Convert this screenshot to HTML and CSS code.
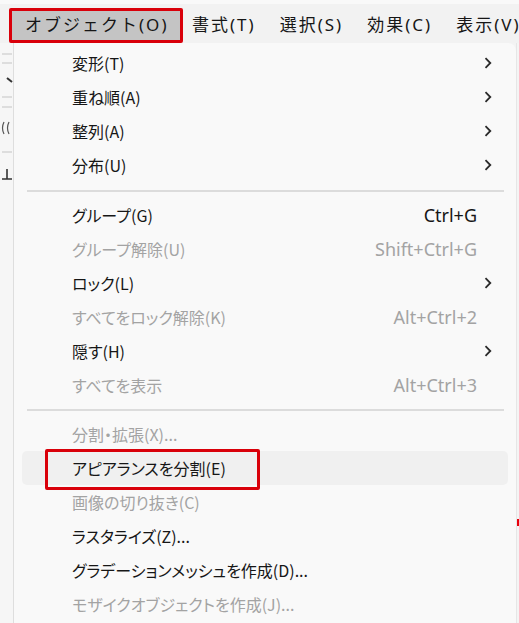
FILE: index.html
```html
<!DOCTYPE html>
<html lang="ja">
<head>
<meta charset="utf-8">
<link rel="stylesheet" href="styles.css">
</head>
<body>
<div class="screen">
  <div class="menubar">
    <div class="mb-item active">オブジェクト(O)</div>
    <div class="mb-item">書式(T)</div>
    <div class="mb-item">選択(S)</div>
    <div class="mb-item">効果(C)</div>
    <div class="mb-item">表示(V)</div>
  </div>
  <div class="main">
    <div class="toolstrip">
      <svg width="13" height="580" viewBox="0 0 13 580">
        <g stroke="#d4d4d4" stroke-width="1.5">
          <line x1="2" y1="11" x2="12" y2="11"/>
          <line x1="2" y1="20" x2="12" y2="20"/>
          <line x1="2" y1="54" x2="12" y2="54"/>
          <line x1="2" y1="64" x2="12" y2="64"/>
          <line x1="2" y1="109" x2="12" y2="109"/>
        </g>
        <line x1="7" y1="35" x2="12" y2="39" stroke="#333" stroke-width="2"/>
        <path d="M4 79 Q1 85 4 91 M9 79 Q6 85 9 91" fill="none" stroke="#555" stroke-width="1.2"/>
        <path d="M7 126 V136 M2 136 H12" fill="none" stroke="#333" stroke-width="1.6"/>
      </svg>
    </div>
    <div class="menu">
      <div class="item"><span class="label">変形(T)</span><svg class="arrow" viewBox="0 0 8 12"><path d="M1.5 1.2 L6.3 6 L1.5 10.8"/></svg></div>
      <div class="item"><span class="label">重ね順(A)</span><svg class="arrow" viewBox="0 0 8 12"><path d="M1.5 1.2 L6.3 6 L1.5 10.8"/></svg></div>
      <div class="item"><span class="label">整列(A)</span><svg class="arrow" viewBox="0 0 8 12"><path d="M1.5 1.2 L6.3 6 L1.5 10.8"/></svg></div>
      <div class="item"><span class="label">分布(U)</span><svg class="arrow" viewBox="0 0 8 12"><path d="M1.5 1.2 L6.3 6 L1.5 10.8"/></svg></div>
      <div class="sep sep1"></div>
      <div class="item"><span class="label">グループ(G)</span><span class="key">Ctrl+G</span></div>
      <div class="item disabled"><span class="label">グループ解除(U)</span><span class="key">Shift+Ctrl+G</span></div>
      <div class="item"><span class="label">ロック(L)</span><svg class="arrow" viewBox="0 0 8 12"><path d="M1.5 1.2 L6.3 6 L1.5 10.8"/></svg></div>
      <div class="item disabled"><span class="label">すべてをロック解除(K)</span><span class="key">Alt+Ctrl+2</span></div>
      <div class="item"><span class="label">隠す(H)</span><svg class="arrow" viewBox="0 0 8 12"><path d="M1.5 1.2 L6.3 6 L1.5 10.8"/></svg></div>
      <div class="item disabled"><span class="label">すべてを表示</span><span class="key">Alt+Ctrl+3</span></div>
      <div class="sep sep2"></div>
      <div class="item disabled"><span class="label">分割・拡張(X)...</span></div>
      <div class="item hover"><span class="label">アピアランスを分割(E)</span><span class="callout"></span></div>
      <div class="item disabled"><span class="label">画像の切り抜き(C)</span></div>
      <div class="item"><span class="label">ラスタライズ(Z)...</span></div>
      <div class="item"><span class="label">グラデーションメッシュを作成(D)...</span></div>
      <div class="item disabled"><span class="label">モザイクオブジェクトを作成(J)...</span></div>
    </div>
    <div class="edge"><span class="edge-mark"></span></div>
  </div>
</div>
</body>
</html>
```
FILE: styles.css
```css
html, body {
  margin: 0;
  padding: 0;
}
body {
  background: #f3f3f3;
  font-family: "Noto Sans CJK JP", sans-serif;
  font-feature-settings: "palt";
  color: #161616;
}
.screen {
  width: 519px;
  height: 623px;
  overflow: hidden;
  display: flex;
  flex-direction: column;
}
.menubar {
  height: 43px;
  box-sizing: border-box;
  padding: 8px 0 0 9px;
  display: flex;
  align-items: stretch;
  background: linear-gradient(#f9f9f9 0, #f9f9f9 4px, #f2f2f2 4px);
  white-space: nowrap;
  flex: none;
  font-family: "Noto Sans", "Noto Sans CJK JP", sans-serif;
  font-feature-settings: normal;
}
.mb-item {
  display: flex;
  align-items: center;
  font-size: 17px;
  letter-spacing: 2px;
  margin-right: 24px;
  line-height: 1;
  padding-bottom: 2px;
}
.mb-item.active {
  box-sizing: border-box;
  width: 174px;
  flex: none;
  padding-left: 13px;
  border: 3px solid #d9000a;
  border-radius: 2px;
  background: #c4c4c4;
  margin-right: 9px;
}
.main {
  flex: 1;
  display: flex;
  min-height: 0;
}
.toolstrip {
  width: 13px;
  flex: none;
  background: #f6f6f6;
}
.toolstrip svg {
  display: block;
}
.menu {
  width: 503px;
  flex: none;
  box-sizing: border-box;
  background: #f9f9f9;
  border-left: 1px solid #dedede;
  border-top-right-radius: 8px;
  padding-top: 3px;
  overflow: hidden;
}
.edge {
  flex: 1;
  background: #f4f4f4;
  border-left: 1px solid #e6e6e6;
  display: flex;
  flex-direction: column;
  padding-top: 476px;
}
.edge-mark {
  display: block;
  height: 7px;
  background: #e8000c;
}
.item {
  position: relative;
  height: 34px;
  margin: 0 8px;
  padding: 0 16px 0 50px;
  display: flex;
  align-items: center;
  font-size: 16px;
  white-space: nowrap;
  border-radius: 5px;
}
.item.disabled {
  color: #a3a3a3;
}
.item.hover {
  background: #f0f0f0;
}
.label {
  line-height: 1;
}
.key {
  margin-left: auto;
  margin-right: 15px;
  font-family: "Noto Sans", sans-serif;
  font-size: 18px;
}
.arrow {
  margin-left: auto;
  width: 8px;
  height: 12px;
  fill: none;
  stroke: #2a2a2a;
  stroke-width: 1.8;
}
.sep {
  height: 2px;
  background: #dcdcdc;
  margin-left: 13px;
  margin-right: 12px;
}
.sep1 {
  margin-top: 8px;
  margin-bottom: 6px;
}
.sep2 {
  margin-top: 7px;
  margin-bottom: 6px;
}
.callout {
  position: absolute;
  left: 23px;
  top: -2px;
  width: 215px;
  height: 41px;
  box-sizing: border-box;
  border: 3px solid #d9000a;
  border-radius: 2px;
}
```
